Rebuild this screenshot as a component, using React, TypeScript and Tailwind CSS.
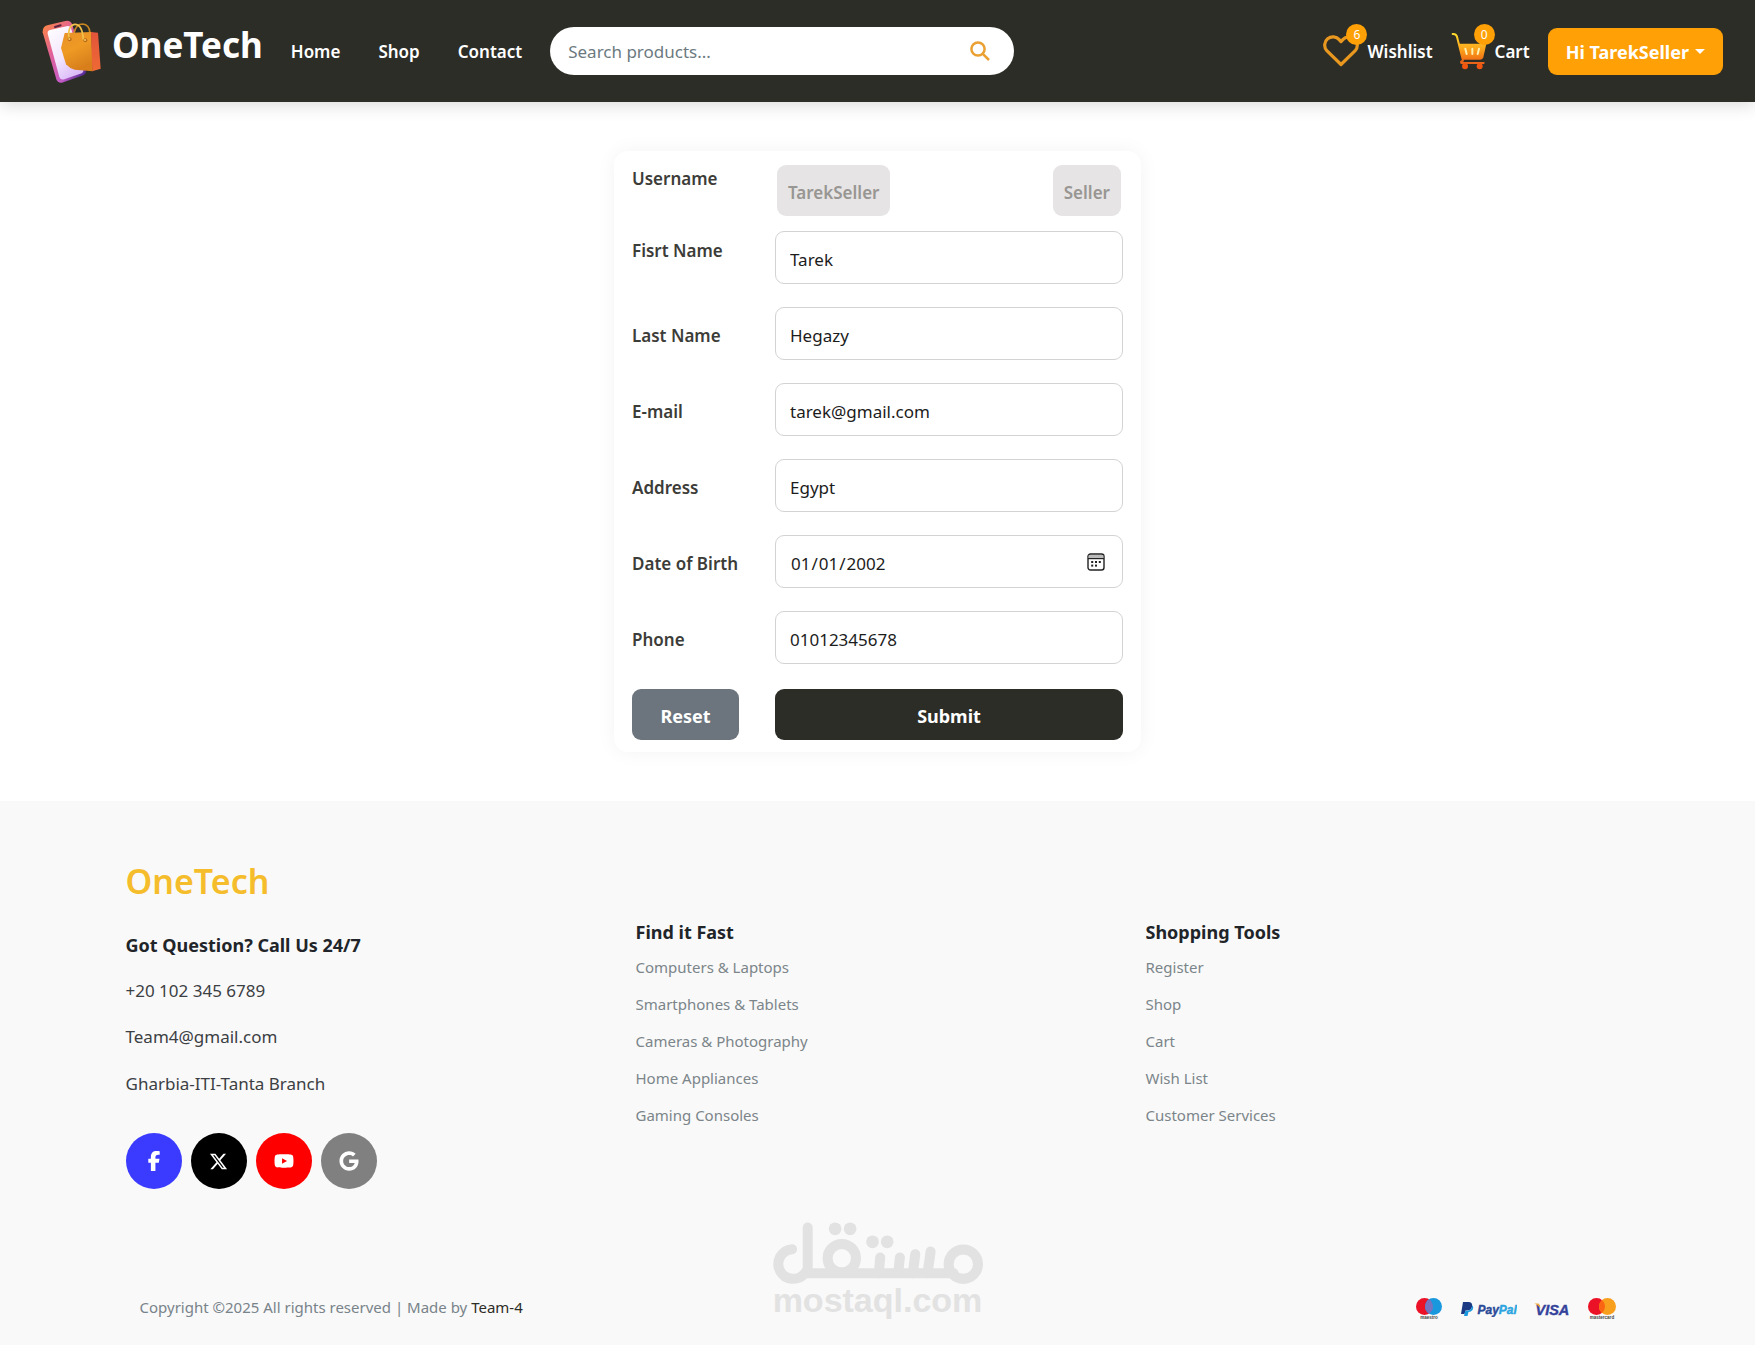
import React from "react";
import { FaFacebookF, FaXTwitter, FaYoutube, FaGoogle } from "react-icons/fa6";

function BrandLogo() {
  return (
    <svg viewBox="36 28 180 192" className="h-16 w-[60px] shrink-0" aria-hidden="true">
      <defs>
        <linearGradient id="phone-body" x1="0" y1="0" x2="0.9" y2="1">
          <stop offset="0" stopColor="#ff8a3c" />
          <stop offset="0.4" stopColor="#e0609a" />
          <stop offset="0.75" stopColor="#c45cc8" />
          <stop offset="1" stopColor="#3a1f8a" />
        </linearGradient>
        <linearGradient id="phone-screen" x1="0" y1="0" x2="0.6" y2="1">
          <stop offset="0" stopColor="#ffffff" />
          <stop offset="0.6" stopColor="#f3e6ff" />
          <stop offset="1" stopColor="#dcbcf8" />
        </linearGradient>
        <linearGradient id="bag-front" x1="0" y1="0" x2="0.4" y2="1">
          <stop offset="0" stopColor="#e8912a" />
          <stop offset="0.5" stopColor="#ee9a24" />
          <stop offset="1" stopColor="#d87f1c" />
        </linearGradient>
        <linearGradient id="bag-side" x1="0" y1="0" x2="0" y2="1">
          <stop offset="0" stopColor="#e2543a" />
          <stop offset="1" stopColor="#ef6a35" />
        </linearGradient>
      </defs>
      <path d="M38 68 Q37 51 52 47 L106 34 Q122 31 127 45 L168 186 Q169 193 160 197 L96 219 Q83 221 79 209 Z" fill="url(#phone-body)" />
      <path d="M53 72 Q52 63 60 61 L113 49 Q120 48 123 56 L160 182 Q161 188 155 191 L103 209 Q92 212 88 202 Z" fill="url(#phone-screen)" />
      <path d="M75 52 L92 47" stroke="#5b2340" strokeWidth="6" strokeLinecap="round" />
      <path d="M132 70 Q138 43 158 43 Q178 44 180 70" fill="none" stroke="#c9861f" strokeWidth="5" />
      <path d="M104 70 L184 67 L188 185 L134 180 Q118 176 108 164 L93 115 Z" fill="url(#bag-front)" />
      <path d="M183 67 L204 69 L212 177 L187 185 Z" fill="url(#bag-side)" />
      <path d="M117 90 Q112 48 134 44 Q157 43 160 90" fill="none" stroke="#f2c14a" strokeWidth="5" />
      <circle cx="119" cy="89" r="6" fill="#b96b18" />
      <circle cx="118" cy="88" r="3" fill="#f6cf6a" />
      <circle cx="166" cy="92" r="6" fill="#b96b18" />
      <circle cx="165" cy="91" r="3" fill="#f6cf6a" />
    </svg>
  );
}

function HeartIcon() {
  return (
    <svg viewBox="0 0 36 32" className="h-8 w-9" fill="none" aria-hidden="true">
      <path
        d="M18 29.5 L3.8 15.6 C0.6 12 1.2 6.6 4.6 3.8 C8.2 1 13.4 1.4 16.2 4.6 L18 6.6 L19.8 4.6 C22.6 1.4 27.8 1 31.4 3.8 C34.8 6.6 35.4 12 32.2 15.6 Z"
        stroke="#e8971f"
        strokeWidth="3.2"
        strokeLinejoin="round"
      />
    </svg>
  );
}

function CartIcon() {
  return (
    <svg viewBox="452 96 108 114" className="h-[38px] w-9" fill="none" aria-hidden="true">
      <defs>
        <linearGradient id="cart" x1="0" y1="96" x2="0" y2="208" gradientUnits="userSpaceOnUse">
          <stop offset="0" stopColor="#ffe22e" />
          <stop offset="0.45" stopColor="#fba61c" />
          <stop offset="1" stopColor="#e8420f" />
        </linearGradient>
      </defs>
      <path d="M457 102 Q467 101 470 110 L487 178" stroke="url(#cart)" strokeWidth="6" strokeLinecap="round" />
      <path d="M475 131 H558 L549 172 Q547 179 540 179 H488 Z" fill="url(#cart)" />
      <path d="M495 146 L499 162 M516 146 V162 M536 146 L532 162" stroke="#fff0b0" strokeWidth="6" strokeLinecap="round" />
      <path d="M483 189 Q480 183 488 182 M483 189 H550" stroke="#e8651a" strokeWidth="6" strokeLinecap="round" />
      <circle cx="494" cy="199" r="9" fill="#f0560f" />
      <circle cx="538" cy="199" r="9" fill="#f0560f" />
    </svg>
  );
}

function SearchIcon() {
  return (
    <svg viewBox="0 0 20 20" className="size-5" fill="none" stroke="#eaa032" strokeWidth="2.5" aria-hidden="true">
      <circle cx="8" cy="8" r="6.6" />
      <path d="M12.8 12.8 L19 19" />
    </svg>
  );
}

function CalendarIcon() {
  return (
    <svg viewBox="0 0 18 18" className="size-[18px]" fill="none" stroke="#222" aria-hidden="true">
      <rect x="1" y="1" width="16" height="16" rx="2.5" strokeWidth="1.4" />
      <path d="M1.7 2 H16.3 V5 H1.7 Z" fill="#bbb" stroke="none" />
      <path d="M1 5.6 H17" strokeWidth="1.2" />
      <g fill="#222" stroke="none">
        <rect x="4.2" y="8" width="2" height="2" />
        <rect x="8" y="8" width="2" height="2" />
        <rect x="11.8" y="8" width="2" height="2" />
        <rect x="4.2" y="11.6" width="2" height="2" />
        <rect x="8" y="11.6" width="2" height="2" />
      </g>
    </svg>
  );
}

function Badge({ count }: { count: number }) {
  return (
    <span className="absolute -top-2 -right-2 flex size-[21px] items-center justify-center rounded-full bg-[#ffa006] text-xs font-normal text-white">
      {count}
    </span>
  );
}

function Header() {
  return (
    <header className="flex items-center bg-[#2d2d27] py-[19px] pr-8 pl-[42px] text-white shadow-[0_3px_16px_rgba(0,0,0,0.15)]">
      <a href="#" className="flex items-center gap-2.5">
        <BrandLogo />
        <span className="pb-3 text-[35px] leading-10 font-bold">OneTech</span>
      </a>
      <nav className="ml-7 flex gap-[38px] pt-0.5 text-[17px] font-semibold">
        <a href="#">Home</a>
        <a href="#">Shop</a>
        <a href="#">Contact</a>
      </nav>
      <form className="ml-7 flex h-12 w-[464px] items-center rounded-full bg-white pr-6 pl-[18px]">
        <input
          type="search"
          aria-label="Search products"
          placeholder="Search products..."
          className="min-w-0 flex-1 pt-0.5 text-[17px] text-[#212529] outline-none placeholder:text-[#6c7a80]"
        />
        <button type="button" aria-label="Search">
          <SearchIcon />
        </button>
      </form>
      <div className="ml-auto flex items-center text-[17px] font-semibold">
        <a href="#" className="flex items-center gap-2">
          <span className="relative flex h-[38px] items-center">
            <HeartIcon />
            <Badge count={6} />
          </span>
          <span className="pt-0.5">Wishlist</span>
        </a>
        <a href="#" className="ml-[18px] flex items-center gap-2">
          <span className="relative flex h-[38px] items-center">
            <CartIcon />
            <Badge count={0} />
          </span>
          <span className="pt-0.5">Cart</span>
        </a>
        <button
          type="button"
          className="ml-[18px] flex h-[47px] items-center gap-1.5 rounded-[9px] bg-[#ffa006] px-[18px] text-lg font-bold"
        >
          <span className="pt-0.5">Hi TarekSeller</span>
          <span className="size-0 border-x-5 border-t-5 border-x-transparent border-t-white" />
        </button>
      </div>
    </header>
  );
}

const fields = [
  { id: "first", label: "Fisrt Name", type: "text", value: "Tarek" },
  { id: "last", label: "Last Name", type: "text", value: "Hegazy" },
  { id: "email", label: "E-mail", type: "email", value: "tarek@gmail.com" },
  { id: "address", label: "Address", type: "text", value: "Egypt" },
  { id: "dob", label: "Date of Birth", type: "date", value: "2002-01-01" },
  { id: "phone", label: "Phone", type: "tel", value: "01012345678" },
];

function ProfileForm() {
  return (
    <form className="mx-auto flex max-w-[527px] flex-col rounded-[14px] bg-white px-[18px] pt-3.5 pb-3 text-[17px] shadow-[0_0_20px_rgba(0,0,0,0.05)]">
      <div className="mb-[15px] grid grid-cols-[107px_1fr] gap-9">
        <span className="leading-[27px] font-semibold text-[#3c3c38]">Username</span>
        <div className="flex justify-between px-0.5 font-semibold text-[#989692]">
          <span className="flex h-[51px] items-center rounded-[9px] bg-[#e6e4e5] px-[11px] pt-1">TarekSeller</span>
          <span className="flex h-[51px] items-center rounded-[9px] bg-[#e6e4e5] px-[11px] pt-1">Seller</span>
        </div>
      </div>
      <div className="flex flex-col gap-[23px]">
        {fields.map((f) => (
          <div key={f.id} className="grid grid-cols-[107px_1fr] items-center gap-9">
            <label
              htmlFor={f.id}
              className={
                f.id === "first"
                  ? "self-start pt-1.5 leading-[27px] font-semibold whitespace-nowrap text-[#3c3c38]"
                  : "pt-1 leading-[27px] font-semibold whitespace-nowrap text-[#3c3c38]"
              }
            >
              {f.label}
            </label>
            <div className="relative">
              <input
                id={f.id}
                type={f.type}
                defaultValue={f.value}
                className="h-[53px] w-full rounded-[9px] border border-[#d3d3d3] bg-white px-3.5 pt-1 text-[#1c1c1c] outline-none [&::-webkit-calendar-picker-indicator]:opacity-0"
              />
              {f.type === "date" && (
                <span className="pointer-events-none absolute inset-y-0 right-[18px] flex items-center">
                  <CalendarIcon />
                </span>
              )}
            </div>
          </div>
        ))}
      </div>
      <div className="mt-[25px] grid grid-cols-[107px_1fr] gap-9 text-lg font-bold text-white">
        <button type="reset" className="h-[51px] rounded-[9px] bg-[#6c757d] pt-0.5">
          Reset
        </button>
        <button type="submit" className="h-[51px] rounded-[9px] bg-[#2d2d27] pt-0.5">
          Submit
        </button>
      </div>
    </form>
  );
}

function LinkColumn({ title, links }: { title: string; links: string[] }) {
  return (
    <div className="px-[13px] pt-[60px]">
      <h3 className="text-lg leading-7 font-bold text-[#212529]">{title}</h3>
      <ul className="mt-[7px] flex flex-col gap-[9px] text-[15px] leading-7 text-[#7b858a]">
        {links.map((link) => (
          <li key={link}>
            <a href="#">{link}</a>
          </li>
        ))}
      </ul>
    </div>
  );
}

function Watermark() {
  return (
    <div className="pointer-events-none absolute inset-x-0 bottom-[29px] flex flex-col items-center text-[#e2e2e2]">
      <svg viewBox="96 62 632 185" className="h-[62px] w-[211px]" fill="none" stroke="currentColor" strokeLinecap="round" aria-hidden="true">
        <g strokeWidth="30">
          <path d="M156 143 A44.5 44.5 0 1 0 194 215.500 H640" />
          <path d="M203 78 V215" />
          <circle cx="305" cy="170" r="42.5" />
          <path d="M420 168 L416 215 M479 168 L474 215 M525 158 L518 215 M571 150 L562 215" />
          <circle cx="669" cy="188" r="44" />
        </g>
        <g fill="currentColor" stroke="none">
          <circle cx="285" cy="82" r="19" />
          <circle cx="330" cy="82" r="19" />
          <circle cx="397" cy="121" r="19" />
          <circle cx="441" cy="121" r="19" />
        </g>
      </svg>
      <span className="font-['Liberation_Sans',sans-serif] text-[34px] leading-8 font-bold">mostaql.com</span>
    </div>
  );
}

function PaymentLogos() {
  return (
    <div className="flex items-center pt-1">
      <svg viewBox="0 0 26 22" className="h-[22px] w-[26px]" role="img" aria-label="Maestro">
        <circle cx="8.500" cy="8.500" r="8.500" fill="#eb1127" />
        <circle cx="17.500" cy="8.500" r="8.500" fill="#1a98de" />
        <path d="M13 1.300 A8.500 8.500 0 0 1 13 15.700 A8.500 8.500 0 0 1 13 1.300" fill="#7673c0" />
        <text x="13" y="20.500" textAnchor="middle" fontSize="4.500" fontFamily="Liberation Sans" fontWeight="700" fill="#444">maestro</text>
      </svg>
      <svg viewBox="0 0 56 16" className="ml-[19px] h-4 w-14" role="img" aria-label="PayPal">
        <path d="M2 1 H8 Q12 1.500 11 6 Q10 9.500 6 9.500 H4.500 L3.500 13 H0 Z" fill="#1b3a83" />
        <path d="M11.200 4.500 Q13 6 11.500 9 Q10 11 7.500 11 L6.500 15 H3 L4.300 9.800 H6.500 Q10.500 9.500 11.200 4.500" fill="#1a98de" />
        <text x="16.500" y="12.500" fontSize="12" fontFamily="Liberation Sans" fontStyle="italic" fontWeight="700" fill="#2a4a98" stroke="#2a4a98" strokeWidth="0.400">
          Pay<tspan fill="#2ba4e0" stroke="#2ba4e0">Pal</tspan>
        </text>
      </svg>
      <svg viewBox="0 0 36 14" className="ml-[17px] h-3.5 w-9" role="img" aria-label="Visa">
        <text x="1.500" y="12.500" fontSize="14.500" fontFamily="Liberation Sans" fontStyle="italic" fontWeight="700" fill="#34429b" stroke="#34429b" strokeWidth="0.400">VISA</text>
        <path d="M0.500 1.500 H4.500 Q6 2.500 6.500 6 Q4 3 0.500 1.500" fill="#f0a43c" />
      </svg>
      <svg viewBox="0 0 28 22" className="ml-[18px] h-[22px] w-7" role="img" aria-label="Mastercard">
        <circle cx="8.500" cy="8.500" r="8.500" fill="#eb1127" />
        <circle cx="19.500" cy="8.500" r="8.500" fill="#f99f1e" />
        <path d="M14 2 A8.500 8.500 0 0 1 14 15 A8.500 8.500 0 0 1 14 2" fill="#fb6413" />
        <text x="14" y="20.500" textAnchor="middle" fontSize="4.500" fontFamily="Liberation Sans" fontWeight="700" fill="#444">mastercard</text>
      </svg>
    </div>
  );
}

const round = "flex size-14 items-center justify-center rounded-full text-white";

function Footer() {
  return (
    <footer className="relative bg-[#f9f9f9] pt-[57px] pb-6">
      <div className="mx-auto max-w-[1530px]">
        <div className="grid grid-cols-3">
          <div className="px-[13px] text-[17px] leading-7 text-[#3c4043]">
            <h2 className="text-[34px] leading-[46px] font-semibold text-[#f5bd2b]">OneTech</h2>
            <p className="mt-[27px] text-lg leading-7 font-bold text-[#212529]">Got Question? Call Us 24/7</p>
            <p className="mt-[18px]">+20 102 345 6789</p>
            <p className="mt-[18px]">Team4@gmail.com</p>
            <p className="mt-[19px]">Gharbia-ITI-Tanta Branch</p>
            <div className="mt-[35px] flex gap-[9px]">
              <a href="#" aria-label="Facebook" className={`${round} bg-[#3b3bff]`}>
                <FaFacebookF size={20} />
              </a>
              <a href="#" aria-label="X" className={`${round} bg-black`}>
                <FaXTwitter size={19} />
              </a>
              <a href="#" aria-label="YouTube" className={`${round} bg-[#ff0000]`}>
                <FaYoutube size={20} />
              </a>
              <a href="#" aria-label="Google" className={`${round} bg-[#808080]`}>
                <FaGoogle size={20} />
              </a>
            </div>
          </div>
          <LinkColumn
            title="Find it Fast"
            links={["Computers & Laptops", "Smartphones & Tablets", "Cameras & Photography", "Home Appliances", "Gaming Consoles"]}
          />
          <LinkColumn title="Shopping Tools" links={["Register", "Shop", "Cart", "Wish List", "Customer Services"]} />
        </div>
        <div className="mt-[104px] flex items-center justify-between px-[27px]">
          <p className="text-[15px] leading-7 text-[#78838a]">
            Copyright ©2025 All rights reserved | Made by{" "}
            <a href="#" className="text-[#2d2d27]">
              Team-4
            </a>
          </p>
          <PaymentLogos />
        </div>
      </div>
      <Watermark />
    </footer>
  );
}

export default function App() {
  return (
    <div className="flex min-h-screen flex-col bg-white font-['Noto_Sans',sans-serif]">
      <Header />
      <main className="px-4 py-[49px]">
        <ProfileForm />
      </main>
      <Footer />
    </div>
  );
}
